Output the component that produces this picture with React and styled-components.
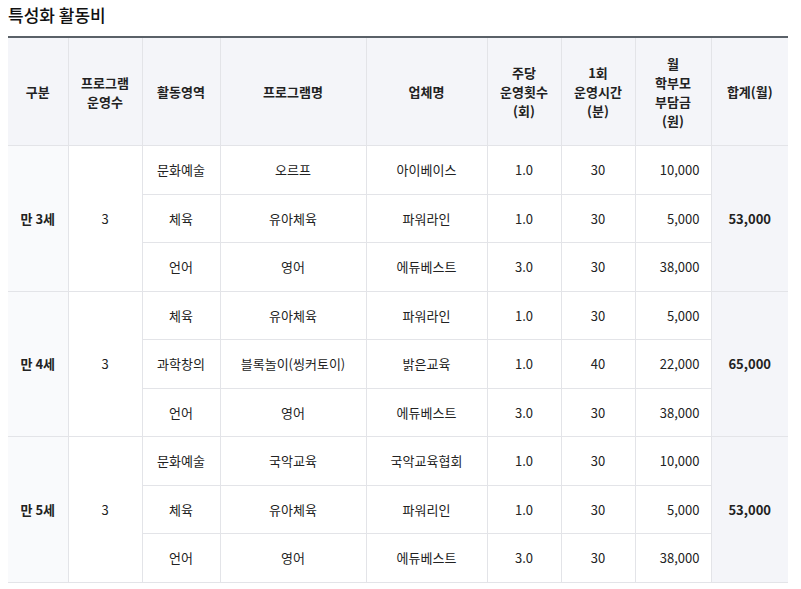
import React from 'react';
import styled, { createGlobalStyle } from 'styled-components';

const GlobalStyle = createGlobalStyle`
    body {
        margin: 0;
        background: #fff;
        font-family: "Noto Sans CJK KR", "Noto Sans", sans-serif;
        color: #222;
    }
`;

const Wrap = styled.div`
    padding: 3px 13px 0 8px;
`;

const Title = styled.h2`
    margin: 0 0 9px;
    font-size: 17px;
    font-weight: 500;
    line-height: 24px;
    color: #111;
`;

const Table = styled.table`
    width: 780px;
    border-collapse: collapse;
    table-layout: fixed;
    border-top: 2px solid #5a6168;
    font-size: 13px;
`;

const Th = styled.th`
    height: 107px;
    padding: 0;
    background: #f4f5f9;
    border: 1px solid #e3e4e8;
    border-top: 0;
    font-weight: 700;
    line-height: 19px;
    color: #222;
    &:first-child { border-left: 0; }
    &:last-child { border-right: 0; }
`;

const Td = styled.td`
    height: 47.5px;
    padding: 0 ${(p) => (p.$right ? '11px' : '0')} 0 0;
    border: 1px solid #e3e4e8;
    text-align: ${(p) => (p.$right ? 'right' : 'center')};
    font-weight: ${(p) => (p.$bold ? 700 : 400)};
    background: ${(p) => p.$bg || '#fff'};
    color: #222;
    &:first-child { border-left: 0; }
    &:last-child { border-right: 0; }
`;

const cols = [60, 74, 78, 146, 121, 74, 74, 76, 77];

const groups = [
    {
        age: '만 3세',
        count: '3',
        total: '53,000',
        rows: [
            ['문화예술', '오르프', '아이베이스', '1.0', '30', '10,000'],
            ['체육', '유아체육', '파워라인', '1.0', '30', '5,000'],
            ['언어', '영어', '에듀베스트', '3.0', '30', '38,000'],
        ],
    },
    {
        age: '만 4세',
        count: '3',
        total: '65,000',
        rows: [
            ['체육', '유아체육', '파워라인', '1.0', '30', '5,000'],
            ['과학창의', '블록놀이(씽커토이)', '밝은교육', '1.0', '40', '22,000'],
            ['언어', '영어', '에듀베스트', '3.0', '30', '38,000'],
        ],
    },
    {
        age: '만 5세',
        count: '3',
        total: '53,000',
        rows: [
            ['문화예술', '국악교육', '국악교육협회', '1.0', '30', '10,000'],
            ['체육', '유아체육', '파워리인', '1.0', '30', '5,000'],
            ['언어', '영어', '에듀베스트', '3.0', '30', '38,000'],
        ],
    },
];

const App = () => (
    <Wrap>
        <GlobalStyle />
        <Title>특성화 활동비</Title>
        <Table>
            <colgroup>
                {cols.map((w, i) => (
                    <col key={i} style={{ width: w }} />
                ))}
            </colgroup>
            <thead>
                <tr>
                    <Th>구분</Th>
                    <Th>프로그램<br />운영수</Th>
                    <Th>활동영역</Th>
                    <Th>프로그램명</Th>
                    <Th>업체명</Th>
                    <Th>주당<br />운영횟수<br />(회)</Th>
                    <Th>1회<br />운영시간<br />(분)</Th>
                    <Th>월<br />학부모<br />부담금<br />(원)</Th>
                    <Th>합계(월)</Th>
                </tr>
            </thead>
            <tbody>
                {groups.map((g) =>
                    g.rows.map((r, i) => (
                        <tr key={g.age + i}>
                            {i === 0 && (
                                <Td rowSpan={3} $bold $bg="#f9fafc">{g.age}</Td>
                            )}
                            {i === 0 && <Td rowSpan={3}>{g.count}</Td>}
                            <Td>{r[0]}</Td>
                            <Td>{r[1]}</Td>
                            <Td>{r[2]}</Td>
                            <Td>{r[3]}</Td>
                            <Td>{r[4]}</Td>
                            <Td $right>{r[5]}</Td>
                            {i === 0 && (
                                <Td rowSpan={3} $bold $bg="#f4f5f9">{g.total}</Td>
                            )}
                        </tr>
                    ))
                )}
            </tbody>
        </Table>
    </Wrap>
);

export default App;
